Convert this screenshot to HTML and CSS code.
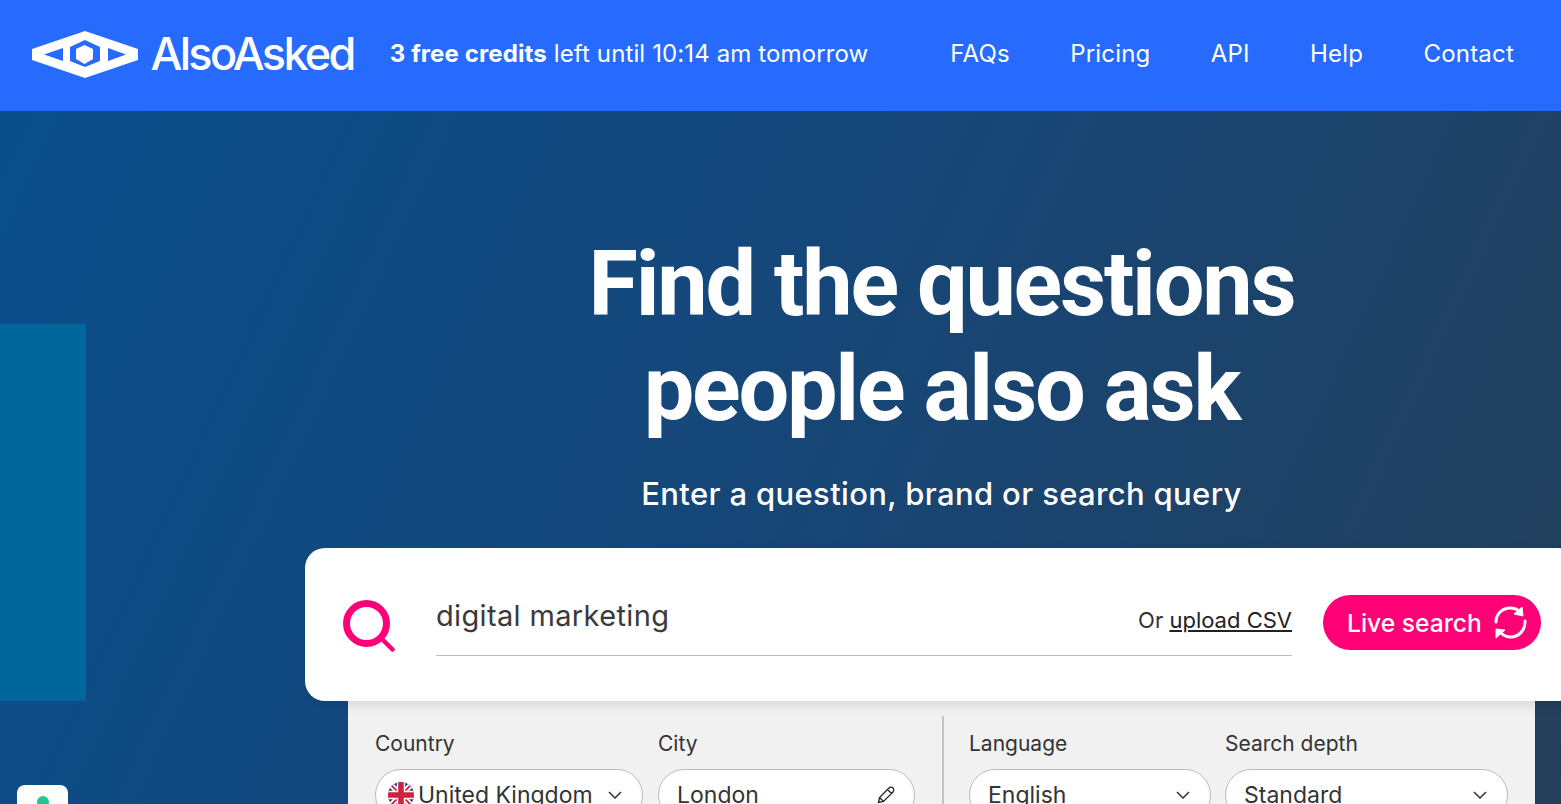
FILE: index.html
```html
<!DOCTYPE html>
<html lang="en">
<head>
    <meta charset="UTF-8">
    <meta name="viewport" content="width=device-width, initial-scale=1.0">
    <title>AlsoAsked</title>
    <link rel="stylesheet" href="styles.css">
</head>
<body>

    <header class="topbar">
        <a class="logo" href="#">
            <svg class="logo-mark" viewBox="0 0 106 47" width="106" height="47">
                <path fill="#fff" fill-rule="evenodd" d="M53 0 106 18V29L53 47 0 29V18ZM53 9 38 16V30L53 36 68 30V16ZM12 23.500 31 30V17ZM94 23.500 76 17V30Z"/>
                <path fill="#fff" d="M52.500 14 61 18V28L52.500 33 44 28V18Z"/>
            </svg>
            <span class="logo-text">AlsoAsked</span>
        </a>
        <p class="credits"><strong>3 free credits</strong> left until 10:14 am tomorrow</p>
        <nav class="nav">
            <a href="#">FAQs</a>
            <a href="#">Pricing</a>
            <a href="#">API</a>
            <a href="#">Help</a>
            <a href="#">Contact</a>
        </nav>
    </header>

    <main class="hero">
        <div class="side-block"></div>
        <div class="chat-badge"><span class="chat-dot"></span></div>

        <div class="hero-inner">
            <h1>Find the questions<br>people also ask</h1>
            <p class="subtitle">Enter a question, brand or search query</p>

            <div class="search-card">
                <svg class="search-icon" viewBox="0 0 52 52" width="52" height="52">
                    <circle cx="23.500" cy="23.500" r="20" fill="none" stroke="#ff0077" stroke-width="7"/>
                    <path d="M37 37 49.500 49.500" fill="none" stroke="#ff0077" stroke-width="4.500" stroke-linecap="round"/>
                </svg>
                <div class="search-field">
                    <span class="search-query">digital marketing</span>
                    <span class="upload">Or <a href="#">upload CSV</a></span>
                </div>
                <button class="live-btn" type="button">
                    Live search
                    <svg viewBox="0 0 33 33" width="33" height="33">
                        <path d="M2 16C2 8 8 2 16.500 2 20 2 23 3 26 6M31 15C31.500 24 25 31 16.500 31 13 31 10 30 7 27" fill="none" stroke="#fff" stroke-width="3" stroke-linecap="round"/>
                        <path d="M28 1 29 10 20 8ZM2 32 2 23 11 24Z" fill="#fff" stroke="#fff" stroke-linejoin="round"/>
                    </svg>
                </button>
            </div>

            <div class="options">
                <div class="options-group group-place">
                    <div class="option">
                        <label>Country</label>
                        <div class="select">
                            <svg class="flag" viewBox="0 0 28 28" width="26" height="26">
                                <defs><clipPath id="flagClip"><circle cx="14" cy="14" r="14"/></clipPath></defs>
                                <g clip-path="url(#flagClip)">
                                    <rect width="28" height="28" fill="#26367a"/>
                                    <path d="M0 0 28 28M28 0 0 28" stroke="#fff" stroke-width="6"/>
                                    <path d="M0 0 28 28M28 0 0 28" stroke="#d0213f" stroke-width="2"/>
                                    <path d="M14 0V28M0 14H28" stroke="#fff" stroke-width="9"/>
                                    <path d="M14 0V28M0 14H28" stroke="#d0213f" stroke-width="6"/>
                                </g>
                            </svg>
                            <span class="select-value">United Kingdom</span>
                            <svg class="chevron" viewBox="0 0 14 8" width="14" height="8"><path d="M1 1 7 7 13 1" fill="none" stroke="#333" stroke-width="1.500"/></svg>
                        </div>
                    </div>
                    <div class="option">
                        <label>City</label>
                        <div class="select select-city">
                            <span class="select-value">London</span>
                            <svg class="pencil" viewBox="0 0 18 18" width="18" height="18"><path d="M1.500 16.500 2.500 11.500 12 2C13 1 15 1 16 2 17 3 17 5 16 6L6.500 15.500ZM2.500 11.500 6.500 15.500M10.500 3.500 14.500 7.500" fill="none" stroke="#222" stroke-width="1.300"/></svg>
                        </div>
                    </div>
                </div>
                <div class="options-group group-search">
                    <div class="option">
                        <label>Language</label>
                        <div class="select">
                            <span class="select-value">English</span>
                            <svg class="chevron" viewBox="0 0 14 8" width="14" height="8"><path d="M1 1 7 7 13 1" fill="none" stroke="#333" stroke-width="1.500"/></svg>
                        </div>
                    </div>
                    <div class="option">
                        <label>Search depth</label>
                        <div class="select">
                            <span class="select-value">Standard</span>
                            <svg class="chevron" viewBox="0 0 14 8" width="14" height="8"><path d="M1 1 7 7 13 1" fill="none" stroke="#333" stroke-width="1.500"/></svg>
                        </div>
                    </div>
                </div>
            </div>
        </div>
    </main>

</body>
</html>
```

FILE: styles.css
```css
html, body {
    height: 804px;
    overflow: hidden;
}

body {
    font-family: 'Inter', 'Open Sans', sans-serif;
    margin: 0;
    padding: 0;
    background-color: #1a4470;
}

.topbar {
    height: 111px;
    background-color: #266bfd;
    color: #fff;
    display: flex;
    align-items: center;
    padding: 0 47px 5px 32px;
    box-sizing: border-box;
}

.logo {
    display: flex;
    align-items: center;
    gap: 12.500px;
    color: #fff;
    text-decoration: none;
    margin-top: 2px;
}

.logo-text {
    font-size: 45px;
    font-weight: 500;
    letter-spacing: -2.700px;
    margin-top: -2px;
}

.credits {
    margin: 0 0 0 36px;
    font-size: 24px;
    font-weight: 400;
    letter-spacing: 0.120px;
}

.credits strong {
    font-weight: 700;
}

.nav {
    margin-left: auto;
    display: flex;
    gap: 60.300px;
}

.nav a {
    color: #fff;
    text-decoration: none;
    font-size: 24px;
    letter-spacing: 0.200px;
}

.hero {
    position: relative;
    height: 693px;
    overflow: hidden;
    background: linear-gradient(115deg, #0a4f8c 0%, #15477a 45%, #233f5a 100%);
}

.side-block {
    position: absolute;
    left: 0;
    top: 213px;
    width: 86px;
    height: 377px;
    background-color: #00669c;
}

.chat-badge {
    position: absolute;
    left: 17px;
    top: 674px;
    width: 51px;
    height: 40px;
    background-color: #fff;
    border-radius: 8px;
}

.chat-dot {
    position: absolute;
    left: 20px;
    top: 11px;
    width: 12px;
    height: 12px;
    border-radius: 50%;
    background-color: #1cc995;
}

.hero-inner {
    margin-left: 305px;
    width: 1273px;
    text-align: center;
}

h1 {
    margin: 0;
    padding-top: 121px;
    font-family: 'Roboto', sans-serif;
    font-size: 90px;
    font-weight: 700;
    line-height: 105px;
    letter-spacing: -2.250px;
    color: #fff;
}

.subtitle {
    margin: 32px 0 0;
    font-size: 31px;
    line-height: 40px;
    font-weight: 500;
    letter-spacing: 0.350px;
    color: #fff;
}

.search-card {
    margin-top: 34px;
    height: 153px;
    background-color: #fff;
    border-radius: 20px;
    display: flex;
    align-items: flex-start;
    text-align: left;
    position: relative;
    z-index: 1;
    box-shadow: 0 4px 12px rgba(0, 0, 0, 0.1);
    box-sizing: border-box;
    padding: 52px 0 0 38px;
}

.search-field {
    margin-left: 41px;
    width: 856px;
    height: 56px;
    border-bottom: 1px solid #bbb;
    display: flex;
    justify-content: space-between;
    color: #333;
    box-sizing: border-box;
}

.search-query {
    font-size: 29px;
    line-height: 32px;
    letter-spacing: 0.350px;
    color: #3a3a3a;
}

.upload {
    font-size: 22px;
    line-height: 40px;
    color: #333;
}

.upload a {
    color: #222;
}

.live-btn {
    margin: -5px 0 0 31px;
    width: 218px;
    height: 55px;
    border: none;
    border-radius: 28px;
    background-color: #ff0077;
    color: #fff;
    font-family: inherit;
    font-size: 24.600px;
    font-weight: 500;
    display: flex;
    align-items: center;
    gap: 12px;
    padding: 0 0 0 24px;
}

.options {
    margin: 0 43px;
    height: 200px;
    background-color: #f1f1f1;
    display: flex;
    text-align: left;
    padding: 15px 0 0 27px;
    box-sizing: border-box;
}

.options-group {
    display: flex;
}

.group-place {
    gap: 15px;
    border-right: 2px solid #c4c4c4;
    padding-right: 27px;
}

.group-search {
    gap: 14px;
    padding-left: 25px;
}

.option {
    padding-top: 15px;
}

.option label {
    display: block;
    font-size: 21px;
    line-height: 26px;
    color: #333;
    margin-bottom: 12px;
}

.select {
    height: 52px;
    background-color: #fff;
    border: 1px solid #bbb;
    border-radius: 26px;
    box-sizing: border-box;
    display: flex;
    align-items: center;
    padding: 0 20px 0 18px;
    font-size: 23px;
    color: #333;
}

.select-value {
    flex: 1;
}

.group-place .option:nth-child(1) .select {
    width: 268px;
    padding-left: 12px;
}

.group-place .option:nth-child(2) .select {
    width: 257px;
}

.group-place .option:nth-child(2) .select-city {
    padding-right: 19px;
}

.group-search .option:nth-child(1) .select {
    width: 242px;
}

.group-search .option:nth-child(2) .select {
    width: 283px;
}

.flag {
    margin-right: 4px;
    flex: none;
}
```
